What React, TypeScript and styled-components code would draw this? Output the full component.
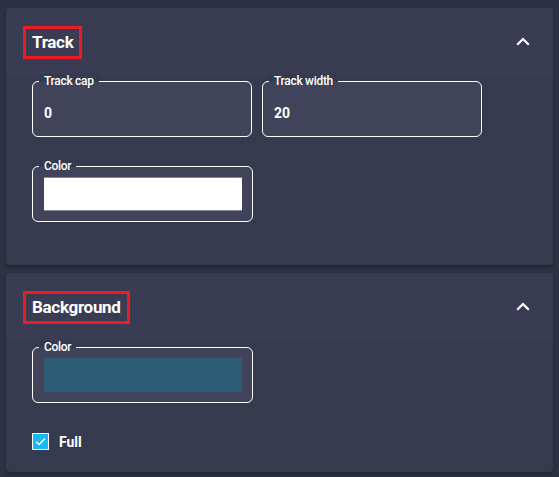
import React from "react";
import styled, { createGlobalStyle } from "styled-components";

const Global = createGlobalStyle`
  html, body { margin: 0; padding: 0; background: #2e3044; }
  body { font-family: Roboto, "Noto Sans", Arial, sans-serif; color: #fff; }
  * { box-sizing: border-box; }
`;

const Page = styled.div`
  display: flex;
  flex-direction: column;
  gap: 8px;
  padding: 8px 6px 0 6px;
  width: 559px;
  height: 477px;
`;

const Card = styled.section`
  background: #363a4f;
  border-radius: 4px;
  box-shadow: 0 2px 3px rgba(0, 0, 0, 0.25);
  overflow: hidden;
`;

const Header = styled.div<{ $h: number }>`
  height: ${(p) => p.$h}px;
  background: #393c52;
  display: flex;
  align-items: flex-start;
  justify-content: space-between;
  padding: 18px 18px 0 17px;
`;

const Title = styled.h2`
  margin: 0;
  border: 3px solid #ec1c24;
  padding: 5px 6px 5px 6px;
  font-size: 17px;
  line-height: 17px;
  font-weight: 700;
  color: #fff;
  letter-spacing: -0.3px;
`;

const Toggle = styled.button`
  background: none;
  border: none;
  padding: 0;
  margin-top: 4px;
  color: #fff;
  display: flex;
  width: 24px;
  height: 24px;
  cursor: pointer;
`;

const Body = styled.div<{ $pt: number; $pb: number }>`
  padding: ${(p) => p.$pt}px 26px ${(p) => p.$pb}px 26px;
  display: flex;
  flex-direction: column;
`;

const Row = styled.div<{ $mt?: number }>`
  display: flex;
  gap: 10px;
  margin-top: ${(p) => p.$mt ?? 0}px;
`;

const Field = styled.fieldset`
  position: relative;
  width: 220px;
  height: 56px;
  margin: 0;
  padding: 0 10px 0 11px;
  border: 1px solid #fff;
  border-radius: 6px;
  background: #40435a;
  display: flex;
  align-items: center;
`;

const Legend = styled.legend`
  position: absolute;
  top: -8px;
  left: 6px;
  padding: 0 5px;
  background: linear-gradient(to bottom, #363a4f 0 8px, #40435a 8px);
  font-size: 12px;
  line-height: 14px;
  font-weight: 500;
  color: #fff;
  letter-spacing: -0.3px;
`;

const Value = styled.div`
  font-size: 14px;
  font-weight: 700;
  color: #fff;
  padding-top: 8px;
`;

const Swatch = styled.div<{ $c: string; $edge: string }>`
  width: 198px;
  height: 34px;
  background: ${(p) => p.$c};
  border-top: 1px solid ${(p) => p.$edge};
  border-bottom: 1px solid ${(p) => p.$edge};
`;

const CheckRow = styled.label`
  display: flex;
  align-items: center;
  gap: 10px;
  margin-top: 30px;
  font-size: 14px;
  font-weight: 700;
`;

const Box = styled.span`
  width: 17px;
  height: 17px;
  background: #14b9f5;
  border: 1px solid #fff;
  display: flex;
  align-items: center;
  justify-content: center;
`;

const Chevron = () => (
  <svg width="24" height="24" viewBox="0 0 24 24" fill="none" stroke="currentColor" strokeWidth="2.2" strokeLinecap="square">
    <path d="M17 14 12 9l-5 5" />
  </svg>
);

export default function App() {
  return (
    <>
      <Global />
      <Page>
        <Card>
          <Header $h={70}>
            <Title>Track</Title>
            <Toggle aria-label="collapse"><Chevron /></Toggle>
          </Header>
          <Body $pt={3} $pb={43}>
            <Row>
              <Field>
                <Legend>Track cap</Legend>
                <Value>0</Value>
              </Field>
              <Field>
                <Legend>Track width</Legend>
                <Value>20</Value>
              </Field>
            </Row>
            <Row $mt={29}>
              <Field>
                <Legend>Color</Legend>
                <Swatch $c="#ffffff" $edge="#86889a" />
              </Field>
            </Row>
          </Body>
        </Card>
        <Card>
          <Header $h={69}>
            <Title>Background</Title>
            <Toggle aria-label="collapse"><Chevron /></Toggle>
          </Header>
          <Body $pt={5} $pb={22}>
            <Row>
              <Field>
                <Legend>Color</Legend>
                <Swatch $c="#2c5d74" $edge="#2c5d74" />
              </Field>
            </Row>
            <CheckRow>
              <Box>
                <svg width="13" height="13" viewBox="0 0 13 13" fill="none" stroke="#fff" strokeWidth="1.4">
                  <path d="M2 6.8 5 9.6 11 3.4" />
                </svg>
              </Box>
              Full
            </CheckRow>
          </Body>
        </Card>
      </Page>
    </>
  );
}
